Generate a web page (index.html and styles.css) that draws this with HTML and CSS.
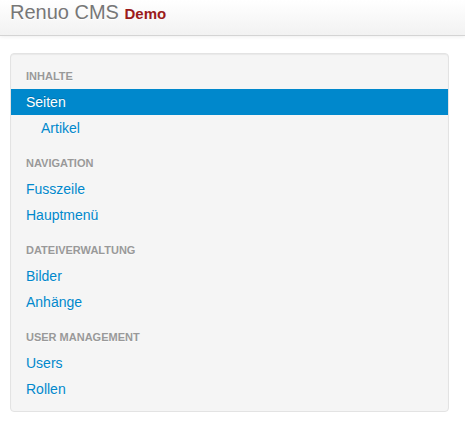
FILE: index.html
```html
<!DOCTYPE html>
<html lang="de">
<head>
<meta charset="utf-8">
<title>Renuo CMS</title>
<link rel="stylesheet" href="styles.css">
</head>
<body>
<div class="navbar">
  <a class="brand" href="#">Renuo CMS <span class="brand-demo">Demo</span></a>
</div>
<div class="container">
  <div class="well">
    <ul class="nav-list">
      <li class="nav-header">Inhalte</li>
      <li class="active"><a href="#">Seiten</a></li>
      <li>
        <ul class="nav-sub">
          <li><a href="#">Artikel</a></li>
        </ul>
      </li>
      <li class="nav-header spaced">Navigation</li>
      <li><a href="#">Fusszeile</a></li>
      <li><a href="#">Hauptmenü</a></li>
      <li class="nav-header spaced">Dateiverwaltung</li>
      <li><a href="#">Bilder</a></li>
      <li><a href="#">Anhänge</a></li>
      <li class="nav-header spaced">User Management</li>
      <li><a href="#">Users</a></li>
      <li><a href="#">Rollen</a></li>
    </ul>
  </div>
</div>
</body>
</html>
```
FILE: styles.css
```css
html, body {
  margin: 0;
  padding: 0;
  background: #ffffff;
  font-family: "Liberation Sans", Arial, Helvetica, sans-serif;
  font-size: 14px;
  line-height: 20px;
  color: #333333;
}
.navbar {
  height: 35px;
  box-sizing: content-box;
  background-image: linear-gradient(to bottom, #ffffff, #f2f2f2);
  border-bottom: 1px solid #d4d4d4;
  box-shadow: 0 1px 4px rgba(0, 0, 0, 0.065);
  padding: 0 10px;
}
.brand {
  display: inline-block;
  padding-top: 2px;
  font-size: 20px;
  line-height: 20px;
  color: #777777;
  text-decoration: none;
  text-shadow: 0 1px 0 #ffffff;
}
.brand-demo {
  font-size: 15px;
  font-weight: bold;
  color: #9b1b1b;
  text-shadow: none;
}
.container {
  padding: 17px 16px 0 10px;
}
.well {
  background: #f5f5f5;
  border: 1px solid #e3e3e3;
  border-radius: 4px;
  box-shadow: inset 0 1px 1px rgba(0, 0, 0, 0.05);
  padding: 9px 0;
}
.nav-list, .nav-sub {
  list-style: none;
  margin: 0;
  padding: 0;
}
.nav-sub {
  padding-left: 15px;
}
.nav-header {
  padding: 3px 15px;
  font-size: 11px;
  font-weight: bold;
  line-height: 20px;
  color: #999999;
  text-transform: uppercase;
  text-shadow: 0 1px 0 rgba(255, 255, 255, 0.5);
}
.nav-header.spaced {
  margin-top: 9px;
}
.nav-list a {
  display: block;
  padding: 3px 15px;
  color: #0088cc;
  text-decoration: none;
  text-shadow: 0 1px 0 rgba(255, 255, 255, 0.5);
}
.nav-list .active > a {
  background: #0088cc;
  color: #ffffff;
  text-shadow: 0 -1px 0 rgba(0, 0, 0, 0.2);
}
```
